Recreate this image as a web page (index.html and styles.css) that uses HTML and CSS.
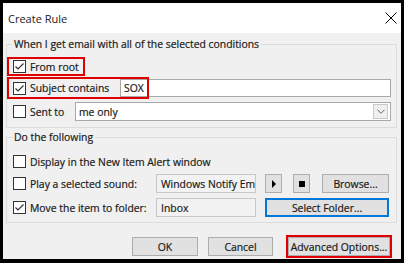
FILE: index.html
```html
<!DOCTYPE html>
<html lang="en">
<head>
  <meta charset="UTF-8">
  <title>Create Rule</title>
  <link rel="stylesheet" href="styles.css">
</head>
<body>
  <div class="window">
    <div class="titlebar">
      <span class="title">Create Rule</span>
      <svg class="close" viewBox="0 0 12 12"><path d="M0.5 0.5 L11.5 11.5 M11.5 0.5 L0.5 11.5" /></svg>
    </div>

    <div class="content">
      <fieldset class="group conditions">
        <legend>When I get email with all of the selected conditions</legend>

        <div class="row row-from">
          <label class="check-label marked">
            <span class="checkbox checked"><svg viewBox="0 0 11 11"><path d="M1.5 5.5 L4 8 L9.5 2.5" /></svg></span>
            From root
          </label>
        </div>

        <div class="row row-subject">
          <label class="check-label label-subject">
            <span class="checkbox checked"><svg viewBox="0 0 11 11"><path d="M1.5 5.5 L4 8 L9.5 2.5" /></svg></span>
            Subject contains
          </label>
          <div class="textbox">SOX</div>
          <div class="mark-box"></div>
        </div>

        <div class="row row-sent">
          <label class="check-label label-sent">
            <span class="checkbox"></span>
            Sent to
          </label>
          <div class="combo">
            <span>me only</span>
            <span class="combo-btn"><svg viewBox="0 0 9 5"><path d="M0.5 0.5 L4.5 4.5 L8.5 0.5" /></svg></span>
          </div>
        </div>
      </fieldset>

      <fieldset class="group actions">
        <legend>Do the following</legend>

        <div class="row row-display">
          <label class="check-label">
            <span class="checkbox"></span>
            Display in the New Item Alert window
          </label>
        </div>

        <div class="row row-sound">
          <label class="check-label label-wide">
            <span class="checkbox"></span>
            Play a selected sound:
          </label>
          <div class="textbox readonly sound-box">Windows Notify Em</div>
          <button class="btn btn-icon btn-play"><span class="play-icon"></span></button>
          <button class="btn btn-icon btn-stop"><span class="stop-icon"></span></button>
          <button class="btn btn-browse">Browse...</button>
        </div>

        <div class="row row-move">
          <label class="check-label label-wide">
            <span class="checkbox checked"><svg viewBox="0 0 11 11"><path d="M1.5 5.5 L4 8 L9.5 2.5" /></svg></span>
            Move the item to folder:
          </label>
          <div class="textbox readonly sound-box">Inbox</div>
          <button class="btn btn-default btn-folder">Select Folder...</button>
        </div>
      </fieldset>

      <div class="footer">
        <button class="btn btn-ok">OK</button>
        <button class="btn btn-cancel">Cancel</button>
        <button class="btn btn-advanced">Advanced Options...</button>
      </div>
    </div>
  </div>
</body>
</html>
```

FILE: styles.css
```css
* {
  margin: 0;
  padding: 0;
  box-sizing: border-box;
}

body {
  font-family: 'Open Sans', 'Noto Sans', sans-serif;
  font-size: 10.4px;
  color: #1a1a1a;
  -webkit-text-stroke: 0.2px #1a1a1a;
  background: #000;
}

.window {
  width: 404px;
  height: 263px;
  border: 3px solid #000;
  border-bottom-width: 4px;
  background: #f0f0f0;
  display: flex;
  flex-direction: column;
}

.titlebar {
  height: 30px;
  flex-shrink: 0;
  background: #fff;
  display: flex;
  align-items: center;
  justify-content: space-between;
  padding: 0 4px 0 5px;
}

.title {
  font-size: 11px;
  -webkit-text-stroke: 0;
}

.close {
  width: 12px;
  height: 12px;
}

.close path {
  stroke: #000;
  stroke-width: 1;
  fill: none;
}

.content {
  padding: 3px 4px 0 3px;
}

/* group boxes */
.group {
  border: 1px solid #dcdcdc;
  min-width: 0;
}

.group legend {
  margin-left: 5px;
  padding: 0 2px;
  line-height: 16px;
}

.conditions {
  padding: 5px 5px 6px 0;
}

.actions {
  margin-top: 1px;
  padding: 7px 7px 5px 0;
}

.row {
  display: flex;
  align-items: center;
  height: 19px;
  position: relative;
}

.row-subject {
  height: 18px;
  margin-top: 3px;
}

.row-sent {
  margin-top: 5px;
}

.row-sound {
  margin-top: 3px;
}

.row-move {
  margin-top: 5px;
}

/* checkboxes */
.check-label {
  display: flex;
  align-items: center;
  gap: 4px;
  height: 100%;
  padding: 0 4px;
  border: 2px solid transparent;
  white-space: nowrap;
}

.check-label.marked {
  border-color: #e00000;
}

.label-subject {
  width: 113px;
  flex-shrink: 0;
}

.label-sent {
  width: 68px;
  flex-shrink: 0;
}

.label-wide {
  width: 149px;
  flex-shrink: 0;
}

.checkbox {
  width: 13px;
  height: 13px;
  flex-shrink: 0;
  border: 1px solid #333;
  background: #fff;
  display: flex;
}

.checkbox svg {
  width: 11px;
  height: 11px;
}

.checkbox path {
  stroke: #333;
  stroke-width: 1.2;
  fill: none;
}

.mark-box {
  position: absolute;
  left: 0;
  top: -2px;
  width: 142px;
  height: 22px;
  border: 2px solid #e00000;
}

/* text inputs */
.textbox {
  flex: 1;
  height: 100%;
  border: 1px solid #a8a8a8;
  background: #fff;
  padding: 0 3px;
  display: flex;
  align-items: center;
  white-space: nowrap;
  overflow: hidden;
}

.textbox.readonly {
  background: #f2f2f2;
  border-color: #c8c8c8;
}

.sound-box {
  flex: none;
  width: 100px;
  padding-left: 4px;
}

.combo {
  flex: 1;
  height: 100%;
  border: 1px solid #a8a8a8;
  background: #fff;
  display: flex;
  align-items: center;
  justify-content: space-between;
  padding: 0 2px 0 3px;
}

.combo-btn {
  width: 15px;
  height: 15px;
  border: 1px solid #c8c8c8;
  background: #f0f0f0;
  display: flex;
  align-items: center;
  justify-content: center;
}

.combo-btn svg {
  width: 8px;
  height: 5px;
}

.combo-btn path {
  stroke: #555;
  stroke-width: 1;
  fill: none;
}

/* buttons */
.btn {
  font-family: inherit;
  font-size: 10.4px;
  color: #1a1a1a;
  height: 19px;
  padding: 0;
  white-space: nowrap;
  background: #e1e1e1;
  border: 1px solid #adadad;
  display: flex;
  align-items: center;
  justify-content: center;
  flex-shrink: 0;
}

.btn-icon {
  width: 17px;
}

.btn-play {
  margin-left: 9px;
}

.btn-stop {
  margin-left: 11px;
}

.btn-browse {
  width: 67px;
  margin-left: 12px;
}

.play-icon {
  width: 0;
  height: 0;
  border-top: 4px solid transparent;
  border-bottom: 4px solid transparent;
  border-left: 4px solid #000;
}

.stop-icon {
  width: 6px;
  height: 6px;
  background: #000;
}

.btn-default {
  border: 2px solid #0078d7;
}

.btn-folder {
  width: 124px;
  margin-left: 9px;
}

.footer {
  display: flex;
  justify-content: flex-end;
  margin-top: 14px;
  padding-right: 7px;
}

.btn-ok {
  width: 66px;
}

.btn-cancel {
  width: 65px;
  margin-left: 10px;
}

.btn-advanced {
  width: 102px;
  margin-left: 15px;
  outline: 2px solid #e00000;
}
```
